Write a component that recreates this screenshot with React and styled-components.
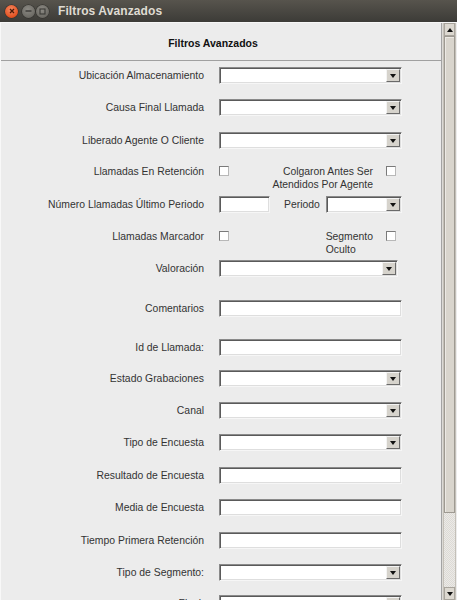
import React from "react";
import styled, { createGlobalStyle } from "styled-components";

const Global = createGlobalStyle`
  html, body { margin: 0; padding: 0; }
  body { width: 457px; height: 600px; overflow: hidden; background: #ececec; font-family: "Liberation Sans", Arial, sans-serif; }
`;

const Window = styled.div`
  width: 457px;
  height: 600px;
  display: flex;
  flex-direction: column;
  overflow: hidden;
`;

const TitleBar = styled.div`
  height: 22px;
  flex: none;
  display: flex;
  align-items: center;
  background: linear-gradient(#57544d, #3c3b37);
  padding-left: 5px;
  gap: 3px;
`;

const WinBtn = styled.div`
  width: 13px;
  height: 13px;
  border-radius: 50%;
  margin-right: ${(p) => p.$mr || 0}px;
  background: ${(p) =>
    p.$close
      ? "radial-gradient(circle at 45% 35%, #f58a63, #e3501f 70%, #b43a12)"
      : "radial-gradient(circle at 45% 35%, #8c8a84, #6c6a64 70%, #55534e)"};
  display: flex;
  align-items: center;
  justify-content: center;
  box-shadow: 0 0 0 0.5px #2e2d2a;
`;

const TitleText = styled.div`
  margin-left: 6px;
  color: #dfdbd2;
  font-family: "Liberation Sans", Arial, sans-serif;
  font-weight: bold;
  font-size: 12px;
  letter-spacing: 0.1px;
`;

const Body = styled.div`
  flex: 1;
  display: flex;
  min-height: 0;
  border-top: 1px solid #f7f7f7;
`;

const Main = styled.div`
  width: 442px;
  flex: none;
  background: #ececec;
  border-right: 1px solid #a3a3a3;
  border-left: 1px solid #f8f8f8;
  box-sizing: border-box;
  overflow: hidden;
`;

const Header = styled.div`
  height: 38px;
  box-sizing: border-box;
  border-bottom: 1px solid #a0a0a0;
  display: flex;
  align-items: center;
  justify-content: center;
  padding: 3px 16px 0 0;
  font-weight: bold;
  font-size: 10.5px;
  color: #111;
`;

const Form = styled.div`
  padding-top: 6px;
  display: flex;
  flex-direction: column;
`;

const Row = styled.div`
  height: ${(p) => p.$h}px;
  flex: none;
  display: flex;
  align-items: flex-start;
`;

const Label = styled.div`
  width: 203px;
  margin-right: 15px;
  text-align: right;
  font-size: 10.4px;
  line-height: 18px;
  color: #333;
  white-space: nowrap;
`;

const Controls = styled.div`
  width: 183px;
  display: flex;
  align-items: flex-start;
`;

const Inset = styled.div`
  box-sizing: border-box;
  height: 17px;
  width: ${(p) => (p.$w ? `${p.$w}px` : "auto")};
  flex: ${(p) => (p.$grow ? "1" : "none")};
  background: #fff;
  border-top: 1px solid #8a8a8a;
  border-left: 1px solid #8a8a8a;
  border-bottom: 1px solid #f6f6f6;
  border-right: 1px solid #f6f6f6;
  box-shadow: inset 1px 1px 0 #5a5a5a, inset -1px -1px 0 #dedede;
`;

const SelectBox = styled(Inset)`
  display: flex;
  justify-content: flex-end;
  padding: 1px;
`;

const ArrowBtn = styled.div`
  width: 14px;
  height: 13px;
  box-sizing: border-box;
  background: #d6d3cc;
  border-top: 1px solid #f4f4f4;
  border-left: 1px solid #f4f4f4;
  border-bottom: 1px solid #6a6a6a;
  border-right: 1px solid #6a6a6a;
  display: flex;
  align-items: center;
  justify-content: center;
`;

const Tri = styled.div`
  width: 0;
  height: 0;
  border-left: 3.5px solid transparent;
  border-right: 3.5px solid transparent;
  ${(p) => (p.$up ? "border-bottom: 4px solid #111;" : "border-top: 4px solid #111;")}
`;

const Check = styled.div`
  width: 10px;
  height: 10px;
  box-sizing: border-box;
  margin-top: 3px;
  background: #fff;
  border: 1px solid #7a7a7a;
  border-right-color: #b8b8b8;
  border-bottom-color: #b8b8b8;
  flex: none;
`;

const SubLabel = styled.div`
  flex: 1;
  text-align: right;
  font-size: 10.4px;
  line-height: 13px;
  margin-top: 2px;
  margin-right: 13px;
  color: #333;
`;

const SubLabelInner = styled.span`
  display: inline-block;
  text-align: ${(p) => p.$align || "right"};
`;

const InlineLabel = styled.div`
  font-size: 10.4px;
  line-height: 18px;
  color: #333;
  margin: 0 6px 0 14px;
`;

const Spacer = styled.div`
  width: ${(p) => p.$w}px;
  flex: none;
`;

const Scrollbar = styled.div`
  width: 14px;
  flex: none;
  display: flex;
  flex-direction: column;
  background: #c4c0b8;
  border-left: 1px solid #dcdad6;
  box-sizing: border-box;
  padding: 0 1px 0 1px;
`;

const ScrollBtn = styled.div`
  height: 13px;
  flex: none;
  background: #dcd8d0;
  display: flex;
  align-items: center;
  justify-content: center;
  box-sizing: border-box;
  border: 1px solid #a9a59d;
`;

const Thumb = styled.div`
  height: 477px;
  flex: none;
  background: #d9d5cd;
  border: 1px solid #9e9a92;
  box-sizing: border-box;
  box-shadow: inset 1px 1px 0 #ece9e4;
`;

const Track = styled.div`
  flex: 1;
  background-color: #e7e5e1;
  background-image: repeating-conic-gradient(#dcdad6 0 25%, #eceae6 0 50%);
  background-size: 2px 2px;
`;

const Select = ({ w, grow }) => (
  <SelectBox $w={w} $grow={grow}>
    <ArrowBtn>
      <Tri />
    </ArrowBtn>
  </SelectBox>
);

const rows = [
  { label: "Ubicación Almacenamiento", type: "select", h: 32 },
  { label: "Causa Final Llamada", type: "select", h: 33 },
  { label: "Liberado Agente O Cliente", type: "select", h: 31 },
];

const rows2 = [
  { label: "Valoración", type: "select", w: 179, h: 40 },
  { label: "Comentarios", type: "input", h: 39 },
  { label: "Id de Llamada:", type: "input", h: 31 },
  { label: "Estado Grabaciones", type: "select", h: 32 },
  { label: "Canal", type: "select", h: 32 },
  { label: "Tipo de Encuesta", type: "select", h: 33 },
  { label: "Resultado de Encuesta", type: "input", h: 32 },
  { label: "Media de Encuesta", type: "input", h: 33 },
  { label: "Tiempo Primera Retención", type: "input", h: 32 },
  { label: "Tipo de Segmento:", type: "select", h: 31 },
  { label: "Final:", type: "select", h: 32 },
];

const renderRow = (r) => (
  <Row key={r.label} $h={r.h}>
    <Label>{r.label}</Label>
    <Controls>
      {r.type === "select" ? <Select w={r.w || 183} /> : <Inset $w={r.w || 183} />}
    </Controls>
  </Row>
);

export default function App() {
  return (
    <>
      <Global />
      <Window>
        <TitleBar>
          <WinBtn $close $mr={1}>
            <svg width="6" height="6" viewBox="0 0 6 6">
              <path d="M1 1L5 5M5 1L1 5" stroke="#4a1a08" strokeWidth="1.3" />
            </svg>
          </WinBtn>
          <WinBtn $mr={-2}>
            <svg width="7" height="6" viewBox="0 0 7 6">
              <path d="M0.5 3H6.5" stroke="#3a3935" strokeWidth="1.4" />
            </svg>
          </WinBtn>
          <WinBtn>
            <svg width="7" height="7" viewBox="0 0 7 7">
              <rect x="1" y="1" width="5" height="5" fill="none" stroke="#3a3935" strokeWidth="1.1" />
            </svg>
          </WinBtn>
          <TitleText>Filtros Avanzados</TitleText>
        </TitleBar>
        <Body>
          <Main>
            <Header>Filtros Avanzados</Header>
            <Form>
              {rows.map(renderRow)}
              <Row $h={33}>
                <Label>Llamadas En Retención</Label>
                <Controls>
                  <Check />
                  <SubLabel>
                    <SubLabelInner>
                      Colgaron Antes Ser
                      <br />
                      Atendidos Por Agente
                    </SubLabelInner>
                  </SubLabel>
                  <Check />
                  <Spacer $w={6} />
                </Controls>
              </Row>
              <Row $h={32}>
                <Label>Número Llamadas Último Periodo</Label>
                <Controls>
                  <Inset $w={51} />
                  <InlineLabel>Periodo</InlineLabel>
                  <Select grow />
                </Controls>
              </Row>
              <Row $h={32}>
                <Label>Llamadas Marcador</Label>
                <Controls>
                  <Check />
                  <SubLabel>
                    <SubLabelInner $align="left">
                      Segmento
                      <br />
                      Oculto
                    </SubLabelInner>
                  </SubLabel>
                  <Check />
                  <Spacer $w={6} />
                </Controls>
              </Row>
              {rows2.map(renderRow)}
            </Form>
          </Main>
          <Scrollbar>
            <ScrollBtn>
              <Tri $up />
            </ScrollBtn>
            <Thumb />
            <Track />
            <ScrollBtn>
              <Tri />
            </ScrollBtn>
          </Scrollbar>
        </Body>
      </Window>
    </>
  );
}
